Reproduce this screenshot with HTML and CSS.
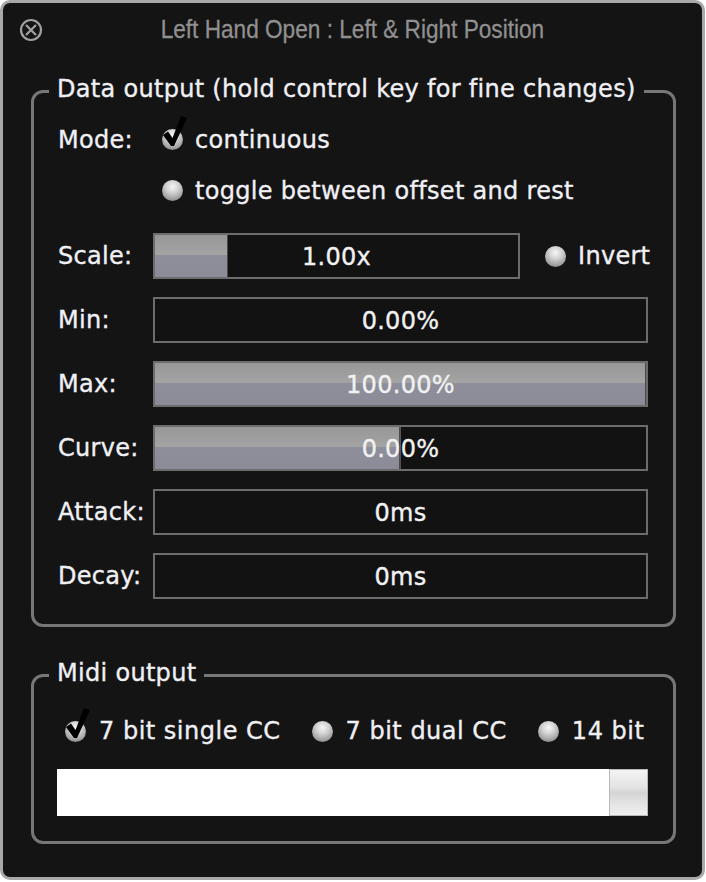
FILE: index.html
```html
<!DOCTYPE html>
<html lang="en">
<head>
    <meta charset="UTF-8">
    <title>Left Hand Open : Left &amp; Right Position</title>
    <link rel="stylesheet" href="styles.css">
</head>
<body>

    <div class="window">
        <div class="titlebar">
            <svg class="close" width="24" height="24" viewBox="0 0 24 24">
                <circle cx="12" cy="12" r="10" fill="none" stroke="#a0a0a0" stroke-width="2.2"/>
                <path d="M7 7 L17 17 M17 7 L7 17" stroke="#a0a0a0" stroke-width="2.2"/>
            </svg>
            <div class="title"><span>Left Hand Open : Left &amp; Right Position</span></div>
        </div>

        <!-- Data output -->
        <fieldset class="group">
            <legend>Data output (hold control key for fine changes)</legend>
            <div class="group-body">
                <div class="row radio-row">
                    <span class="label">Mode:</span>
                    <span class="radio checked">
                        <svg class="tick" width="24" height="32" viewBox="0 0 24 32"><path d="M0 19 L5 15.5 L9.5 22 L18 0 L24 2 L11 30 L8 30 Z" fill="#000"/></svg>
                    </span>
                    <span class="option">continuous</span>
                </div>
                <div class="row radio-row">
                    <span class="label"></span>
                    <span class="radio"></span>
                    <span class="option">toggle between offset and rest</span>
                </div>

                <div class="row slider-row">
                    <span class="label">Scale:</span>
                    <div class="slider short" style="--fill: 20%">1.00x</div>
                    <span class="radio invert"></span>
                    <span class="option">Invert</span>
                </div>
                <div class="row slider-row">
                    <span class="label">Min:</span>
                    <div class="slider" style="--fill: 0%">0.00%</div>
                </div>
                <div class="row slider-row">
                    <span class="label">Max:</span>
                    <div class="slider" style="--fill: 100%">100.00%</div>
                </div>
                <div class="row slider-row">
                    <span class="label">Curve:</span>
                    <div class="slider" style="--fill: 50%">0.00%</div>
                </div>
                <div class="row slider-row">
                    <span class="label">Attack:</span>
                    <div class="slider" style="--fill: 0%">0ms</div>
                </div>
                <div class="row slider-row">
                    <span class="label">Decay:</span>
                    <div class="slider" style="--fill: 0%">0ms</div>
                </div>
            </div>
        </fieldset>

        <!-- Midi output -->
        <fieldset class="group midi">
            <legend>Midi output</legend>
            <div class="group-body">
                <div class="midi-options">
                    <span class="radio checked">
                        <svg class="tick" width="24" height="32" viewBox="0 0 24 32"><path d="M0 19 L5 15.5 L9.5 22 L18 0 L24 2 L11 30 L8 30 Z" fill="#000"/></svg>
                    </span>
                    <span class="option">7 bit single CC</span>
                    <span class="radio"></span>
                    <span class="option">7 bit dual CC</span>
                    <span class="radio"></span>
                    <span class="option">14 bit</span>
                </div>
                <div class="combo">
                    <div class="combo-field"></div>
                    <div class="combo-button"></div>
                </div>
            </div>
        </fieldset>
    </div>

</body>
</html>
```

FILE: styles.css
```css
body {
    margin: 0;
    padding: 0;
    background: #fff;
    font-family: "DejaVu Sans", Verdana, sans-serif;
}

.window {
    width: 705px;
    height: 880px;
    box-sizing: border-box;
    border: 3px solid #a9a9a9;
    border-radius: 10px;
    background: #141414;
    color: #f0f0f4;
}

/* Title bar */
.titlebar {
    display: grid;
    grid-template-columns: 1fr auto 1fr;
    align-items: center;
    height: 52px;
}

.close {
    margin-left: 16px;
    margin-top: 2px;
}

.title {
    font-family: "Liberation Sans", Arial, sans-serif;
    font-size: 26px;
    color: #909090;
    -webkit-text-stroke: 0.3px #909090;
    white-space: nowrap;
    width: 386px;
    display: flex;
    justify-content: center;
}

.title span {
    display: inline-block;
    transform: scaleX(0.87);
}

/* Groups */
.group {
    width: 645px;
    box-sizing: border-box;
    margin: 19px 0 0 28px;
    padding: 5px 25px 25px 15px;
    border: 3px solid #777;
    border-radius: 12px;
    min-width: 0;
}

.group legend {
    font-size: 24px;
    letter-spacing: 0.3px;
    line-height: 30px;
    padding: 0 8px 5px 8px;
    color: #f0f0f4;
    -webkit-text-stroke: 0.35px #f0f0f4;
}

.group-body {
    padding-left: 9px;
    font-size: 24px;
    letter-spacing: 0.3px;
    -webkit-text-stroke: 0.35px #f0f0f4;
}

.row {
    display: flex;
    align-items: center;
}

.label {
    width: 95px;
    flex: none;
}

.radio-row {
    height: 51px;
}

.radio-row .label {
    width: 104px;
}

.slider-row {
    height: 46px;
    margin-top: 18px;
}

.radio-row + .slider-row {
    margin-top: 17px;
}

/* Radio buttons */
.radio {
    width: 21px;
    height: 21px;
    flex: none;
    border-radius: 50%;
    background: radial-gradient(circle at 50% 32%, #f6f6f6 0, #d2d2d2 35%, #a0a0a0 70%, #666 100%);
    position: relative;
}

.radio .tick {
    position: absolute;
    left: 1px;
    top: -13px;
}

.option {
    margin-left: 12px;
    white-space: nowrap;
}

/* Sliders */
.slider {
    flex: 1;
    height: 46px;
    box-sizing: border-box;
    border: 2px solid #6c6c6c;
    display: flex;
    align-items: center;
    justify-content: center;
    padding-top: 2px;
    color: #f2f2f2;
    background-color: #121212;
    background-image:
        linear-gradient(to right, transparent calc(var(--fill) - 1px), #4a4a4a calc(var(--fill) - 1px), #4a4a4a var(--fill), transparent var(--fill)),
        linear-gradient(to bottom, #979797 0, #a4a4a4 48%, #8e8e9a 48%, #8c8c98 100%);
    background-size: 100% 100%, var(--fill) 100%;
    background-repeat: no-repeat;
}

.slider.short {
    flex: none;
    width: 367px;
}

.radio.invert {
    margin-left: 25px;
}

/* Midi output */
.midi {
    margin-top: 31px;
}

.midi-options {
    display: flex;
    align-items: center;
    height: 40px;
    margin-top: 13px;
    padding-left: 7px;
}

.midi-options .option {
    margin-left: 13px;
    margin-right: 31px;
    letter-spacing: 0.5px;
}

.midi-options .option:last-child {
    margin-right: 0;
}

.combo {
    display: flex;
    height: 47px;
    margin-top: 18px;
    margin-left: -1px;
}

.combo-field {
    flex: 1;
    background: #fff;
}

.combo-button {
    width: 39px;
    box-sizing: border-box;
    border: 1px solid #b8b8b8;
    background: linear-gradient(to bottom, #f4f4f4 0, #e2e2e2 40%, #d4d4d4 50%, #e4e4e4 75%, #eeeeee 100%);
}
```
